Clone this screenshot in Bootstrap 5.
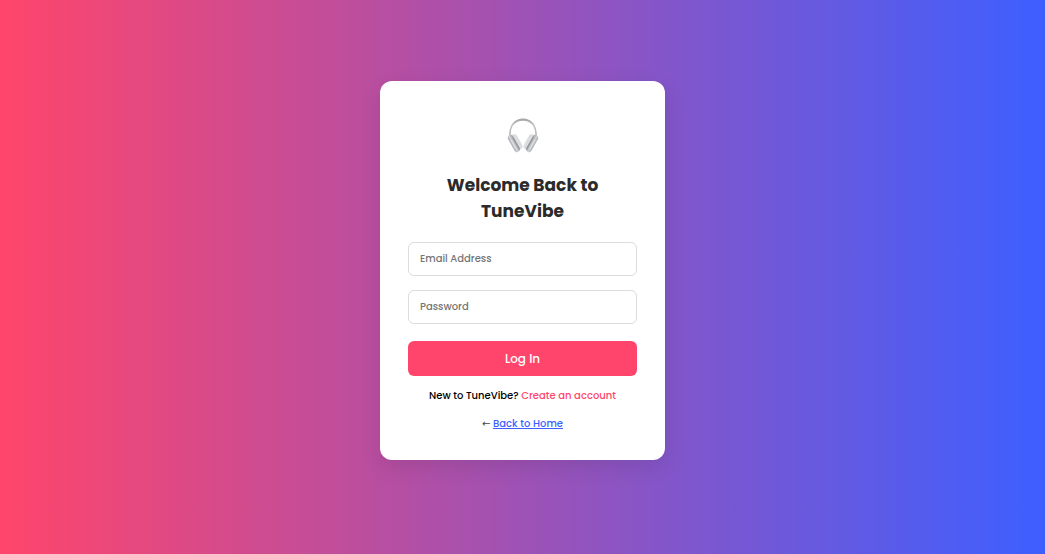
<!DOCTYPE html>
<html lang="en">
<head>
<meta charset="utf-8">
<meta name="viewport" content="width=device-width, initial-scale=1">
<title>TuneVibe – Log In</title>
<link href="https://cdn.jsdelivr.net/npm/bootstrap@5.3.0/dist/css/bootstrap.min.css" rel="stylesheet">
<style>
  :root { --tv-pink: #ff456b; --tv-blue: #3d5fff; }
  body {
    font-family: Poppins, Inter, "Open Sans", sans-serif;
    font-size: 10px;
    line-height: 18px;
    font-weight: 500;
    color: #000;
    background: linear-gradient(to right, var(--tv-pink), var(--tv-blue));
    padding-bottom: 13px;
  }
  .login-card {
    width: 100%;
    max-width: 285px;
    padding: 36px 28px 27px;
    border: 0;
    border-radius: 12px;
    box-shadow: 0 7px 21px rgba(0, 0, 0, .1);
  }
  .brand-icon { width: 32px; height: 36px; margin-bottom: 19px; }
  .login-title { font-size: 17px; line-height: 26px; font-weight: 700; color: #2b2b2b; margin-bottom: 18px; }
  .login-field {
    height: 34px;
    padding: 7px 11px;
    border: 1px solid #dcdcdc;
    border-radius: 6px;
    font-size: 10px;
    line-height: 18px;
    font-weight: 500;
    margin-bottom: 14px;
  }
  .login-field::placeholder { color: #757575; line-height: 18px; }
  .login-btn {
    --bs-btn-color: #fff; --bs-btn-bg: var(--tv-pink);
    --bs-btn-hover-color: #fff; --bs-btn-hover-bg: #e93a5e;
    height: 35px;
    padding: 0;
    border: 0;
    border-radius: 6px;
    font-size: 12px;
    font-weight: 500;
    margin: 3px 0 11px;
  }
  .signup-link { color: var(--tv-pink); }
  .home-line { color: #444; margin-top: 10px; }
  .home-arrow { font-family: "DejaVu Sans", sans-serif; font-weight: 400; line-height: 1; }
  .home-link { color: var(--tv-blue); }
</style>
</head>
<body class="min-vh-100 d-flex align-items-center justify-content-center">
<main class="card login-card text-center">
  <svg class="brand-icon mx-auto" viewBox="-1 0 34 36" preserveAspectRatio="none" role="img" aria-label="Headphones">
    <defs>
      <linearGradient id="band" x1="0" y1="0" x2="0" y2="1">
        <stop offset="0" stop-color="#a2a2a2"/><stop offset=".35" stop-color="#c2c3c4"/><stop offset="1" stop-color="#a9acaf"/>
      </linearGradient>
      <linearGradient id="cup" x1="0" y1="0" x2="1" y2="0">
        <stop offset="0" stop-color="#a5a9ae"/><stop offset=".4" stop-color="#d3d5d8"/><stop offset="1" stop-color="#98999c"/>
      </linearGradient>
    </defs>
    <path d="M1.500 22C-.2 9.500 6 1.500 16 1.500S32.200 9.500 30.500 22l-1.500-2C29.800 10 25 3.800 16 3.800S2.200 10 3 20z" fill="url(#band)"/>
    <g id="left-cup">
      <rect x="6" y="16.500" width="6.800" height="17" rx="3.400" transform="rotate(-31 9.300 25)" fill="#dcdddf"/>
      <rect x="3.200" y="17" width="6.200" height="19" rx="3.100" transform="rotate(-31 6.300 26.500)" fill="url(#cup)"/>
      <path d="M5.200 20.500l7 11.800" stroke="#8d8f92" stroke-width=".9" fill="none"/>
      <path d="M3.300 23l5.700 9.500" stroke="#e3e4e6" stroke-width="1" fill="none"/>
    </g>
    <use href="#left-cup" transform="matrix(-1 0 0 1 32 0)"/>
  </svg>
  <h1 class="login-title">Welcome Back to<br>TuneVibe</h1>
  <form>
    <input class="form-control login-field" type="email" aria-label="Email Address" placeholder="Email Address">
    <input class="form-control login-field" type="password" aria-label="Password" placeholder="Password">
    <button class="btn login-btn w-100" type="submit">Log In</button>
  </form>
  <p class="mb-0">New to TuneVibe? <a class="signup-link text-decoration-none" href="#">Create an account</a></p>
  <p class="home-line mb-0"><span class="home-arrow">←</span> <a class="home-link" href="#">Back to Home</a></p>
</main>
<script src="https://cdn.jsdelivr.net/npm/bootstrap@5.3.0/dist/js/bootstrap.bundle.min.js"></script>
</body>
</html>
